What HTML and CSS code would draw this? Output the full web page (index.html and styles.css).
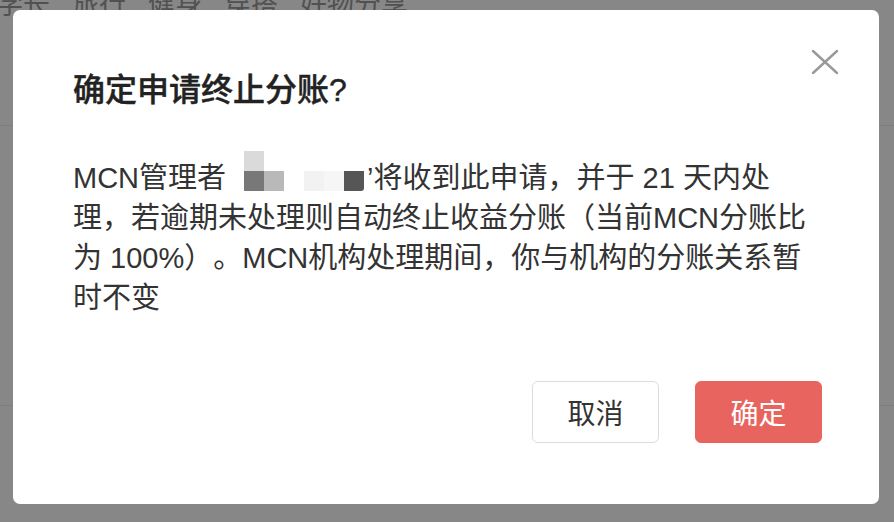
FILE: index.html
```html
<!DOCTYPE html>
<html lang="zh-CN">
<head>
<meta charset="utf-8">
<title>确定申请终止分账</title>
<link rel="stylesheet" href="styles.css">
</head>
<body>
<div class="page">
  <div class="tags"><span>学长</span><span>旅行</span><span>健身</span><span>穿搭</span><span>好物分享</span></div>
  <div class="section section-top"></div>
  <div class="section section-mid"></div>
</div>
<div class="mask"></div>
<div class="dialog">
  <button class="close" aria-label="关闭">
    <svg width="28" height="26" viewBox="0 0 28 26"><path d="M2 2 L26 24 M26 2 L2 24" stroke="#999999" stroke-width="2.4" stroke-linecap="round" fill="none"/></svg>
  </button>
  <h2 class="title">确定申请终止分账?</h2>
  <p class="content">MCN管理者 <span class="mosaic"><span class="cell c1"></span><span class="cell"></span><span class="cell"></span><span class="cell"></span><span class="cell"></span><span class="cell"></span><span class="cell c2"></span><span class="cell c3"></span><span class="cell"></span><span class="cell c4"></span><span class="cell c5"></span><span class="cell c6"></span></span>’将收到此申请，并于 21 天内处理，若逾期未处理则自动终止收益分账（当前MCN分账比为 100%）。MCN机构处理期间，你与机构的分账关系暂时不变</p>
  <div class="actions">
    <button class="btn">取消</button>
    <button class="btn primary">确定</button>
  </div>
</div>
</body>
</html>
```
FILE: styles.css
```css
html, body {
  margin: 0;
  padding: 0;
}
body {
  width: 894px;
  height: 522px;
  overflow: hidden;
  position: relative;
  background: #ffffff;
  font-family: "Liberation Sans", "Noto Sans CJK SC", sans-serif;
  text-spacing-trim: space-all;
}
.page {
  display: flex;
  flex-direction: column;
}
.tags {
  display: flex;
  gap: 22px;
  margin-top: -10px;
  margin-left: -4px;
  height: 30px;
  font-size: 27px;
  line-height: 30px;
  color: #9a9a9a;
}
.section {
  border-bottom: 1px solid #ececec;
}
.section-top {
  height: 105px;
}
.section-mid {
  height: 279px;
}
.mask {
  position: absolute;
  inset: 0;
  background: rgba(0, 0, 0, 0.47);
}
.dialog {
  position: absolute;
  left: 13px;
  top: 10px;
  width: 866px;
  height: 494px;
  box-sizing: border-box;
  padding: 58px 57px 61px 60px;
  background: #ffffff;
  border-radius: 7px;
  display: flex;
  flex-direction: column;
}
.close {
  position: absolute;
  top: 39px;
  right: 40px;
  width: 28px;
  height: 26px;
  padding: 0;
  border: 0;
  background: transparent;
  display: flex;
}
.title {
  margin: 0 0 46px;
  font-size: 32px;
  line-height: 44px;
  font-weight: 500;
  color: #222222;
  -webkit-text-stroke: 0.4px #222222;
}
.content {
  margin: 0 0 63px;
  font-size: 29px;
  line-height: 40px;
  color: #333333;
  text-spacing-trim: space-all;
}
.mosaic {
  display: inline-block;
  width: 120px;
  height: 40px;
  margin-top: -20px;
  overflow: hidden;
  vertical-align: -3px;
  margin-left: 10px;
  margin-right: 3px;
}
.cell {
  float: left;
  width: 20px;
  height: 20px;
  background: #ffffff;
}
.c1 { background: #dadada; }
.c2 { background: #787878; }
.c3 { background: #b9b9b9; }
.c4 { background: #f2f2f2; }
.c5 { background: #f6f6f6; }
.c6 { background: #565656; border-bottom-right-radius: 3px; }
.actions {
  display: flex;
  justify-content: flex-end;
  gap: 36px;
}
.btn {
  width: 127px;
  height: 62px;
  box-sizing: border-box;
  border: 1px solid #dcdcdc;
  border-radius: 6px;
  background: #ffffff;
  color: #333333;
  font-family: "Liberation Sans", "Noto Sans CJK SC", sans-serif;
  font-size: 28px;
  padding: 0;
}
.btn.primary {
  border-color: #e8655f;
  background: #e8655f;
  color: #ffffff;
}
```
